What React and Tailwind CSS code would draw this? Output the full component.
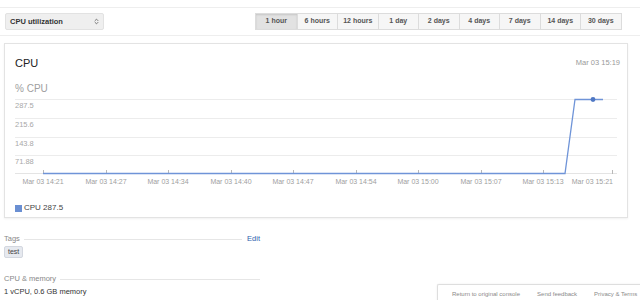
import { ChevronsUpDown } from 'lucide-react'

const RANGES = ['1 hour', '6 hours', '12 hours', '1 day', '2 days', '4 days', '7 days', '14 days', '30 days']

const GRID = [
  { y: 4, label: '287.5' },
  { y: 23, label: '215.6' },
  { y: 42, label: '143.8' },
  { y: 60, label: '71.88' },
]

const TICKS = [
  { x: 38, label: 'Mar 03 14:21' },
  { x: 101, label: 'Mar 03 14:27' },
  { x: 163, label: 'Mar 03 14:34' },
  { x: 226, label: 'Mar 03 14:40' },
  { x: 288, label: 'Mar 03 14:47' },
  { x: 351, label: 'Mar 03 14:54' },
  { x: 413, label: 'Mar 03 15:00' },
  { x: 476, label: 'Mar 03 15:07' },
  { x: 538, label: 'Mar 03 15:13' },
  { x: 607, label: 'Mar 03 15:21', end: true },
]

function CpuChart() {
  return (
    <svg width="622" height="96" className="block" style={{ fontFamily: '"Liberation Sans", Arial, sans-serif' }}>
      {GRID.map((g) => (
        <g key={g.label}>
          <line x1="10" x2="612" y1={g.y + 0.5} y2={g.y + 0.5} stroke="#ececec" />
          <text x="10" y={g.y + 9} fontSize="7.5" fill="#a8a8a8">
            {g.label}
          </text>
        </g>
      ))}
      <line x1="10" x2="612" y1="78.5" y2="78.5" stroke="#e4e4e4" />
      {TICKS.map((t) => (
        <g key={t.label}>
          <line x1={t.x + 0.5} x2={t.x + 0.5} y1="75" y2="79" stroke="#b8b8b8" />
          <text
            x={t.end ? t.x + 1 : t.x}
            y="88.5"
            fontSize="7"
            fill="#a0a0a0"
            textAnchor={t.end ? 'end' : 'middle'}
          >
            {t.label}
          </text>
        </g>
      ))}
      <polyline
        points="38,78.5 560,78.5 570,4.5 598,4.5"
        fill="none"
        stroke="#6f94d8"
        strokeWidth="1.3"
      />
      <circle cx="588" cy="4.5" r="2.4" fill="#4f78c4" />
    </svg>
  )
}

export default function App() {
  return (
    <div
      className="relative w-[640px] h-[300px] overflow-hidden bg-white text-[#333]"
      style={{ fontFamily: '"Liberation Sans", Arial, sans-serif' }}
    >
      {/* Toolbar */}
      <div className="mt-[7px] h-[29px] border-y border-[#eeeeee] flex items-center pl-[5px]">
        <div className="w-[99px] h-[17px] flex items-center justify-between pl-[4px] pr-[3px] bg-[#efefef] border border-[#e2e2e2] rounded-[2px]">
          <span className="text-[7.5px] font-bold text-[#333]">CPU utilization</span>
          <ChevronsUpDown size={7} strokeWidth={3} className="text-[#666]" />
        </div>
        <div className="ml-[151px] flex h-[17px] border border-[#dcdcdc]">
          {RANGES.map((r, i) => (
            <div
              key={r}
              className={
                'w-[40.5px] flex items-center justify-center text-[7px] font-bold text-[#555] ' +
                (i > 0 ? 'border-l border-[#dcdcdc] ' : '') +
                (i === 0 ? 'bg-[#e2e2e2] shadow-[inset_0_1px_2px_rgba(0,0,0,0.12)]' : 'bg-[#f6f6f6]')
              }
            >
              {r}
            </div>
          ))}
        </div>
      </div>

      {/* Chart card */}
      <div className="mt-[7px] ml-[4px] w-[624px] h-[175px] border border-[#e3e3e3] shadow-[0_1px_2px_rgba(0,0,0,0.06)]">
        <div className="flex items-center justify-between pl-[10px] pr-[7px] pt-[12px] h-[26px]">
          <span className="text-[11px] text-[#222] leading-[14px]">CPU</span>
          <span className="text-[7.5px] text-[#999]">Mar 03 15:19</span>
        </div>
        <div className="pl-[10px] mt-[13px] text-[10px] leading-[12px] text-[#a0a0a0]">% CPU</div>
        <CpuChart />
        <div className="flex items-center gap-[2px] pl-[10px] mt-[11px]">
          <span className="w-[7px] h-[7px] bg-[#6a8fd2]" />
          <span className="text-[8px] text-[#444]">CPU 287.5</span>
        </div>
      </div>

      {/* Details */}
      <div className="ml-[4px] mt-[15px] w-[256px]">
        <div className="flex items-center gap-[4px] h-[12px]">
          <span className="text-[7.5px] text-[#888]">Tags</span>
          <span className="flex-1 h-px bg-[#e6e6e6]" />
          <span className="text-[7.5px] text-[#2f5fae] ml-[1px]">Edit</span>
        </div>
        <div className="mt-[1px] flex w-fit items-center h-[12px] px-[3px] bg-[#e6e9ef] border border-[#d3d7df] rounded-[2px] text-[7px] leading-[10px] text-[#444]">
          test
        </div>
        <div className="mt-[15px] flex items-center gap-[4px] h-[12px] w-[256px]">
          <span className="text-[7.5px] text-[#888]">CPU &amp; memory</span>
          <span className="flex-1 h-px bg-[#e6e6e6]" />
        </div>
        <div className="mt-[1px] text-[7.5px] leading-[12px] text-[#333]">1 vCPU, 0.6 GB memory</div>
      </div>

      {/* Footer overlay */}
      <div className="absolute left-[437px] top-[284px] w-[210px] h-[20px] bg-white border-t border-l border-[#dedede] rounded-tl-[2px] shadow-[0_0_2px_rgba(0,0,0,0.08)] flex items-start pt-[5px] pl-[14px] gap-[17px] text-[6px] text-[#8a8a8a]">
        <span>Return to original console</span>
        <span>Send feedback</span>
        <span>Privacy &amp; Terms</span>
      </div>
    </div>
  )
}
